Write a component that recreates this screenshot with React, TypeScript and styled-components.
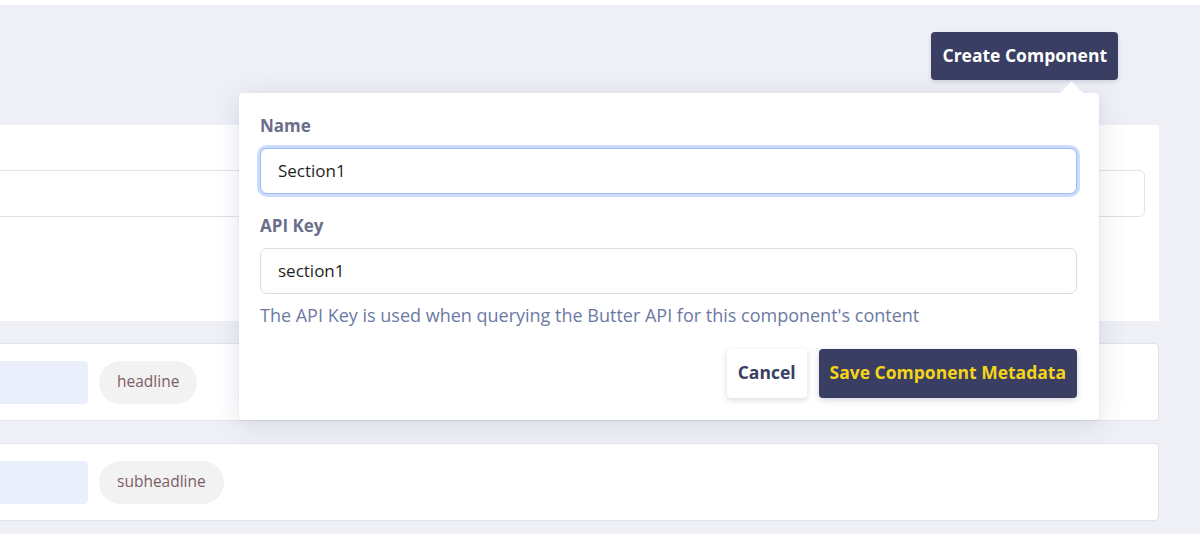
import { FC, ReactElement } from "react";
import styled, { createGlobalStyle } from "styled-components";

const GlobalStyle = createGlobalStyle`
  html, body {
    margin: 0;
    padding: 0;
    background: #eff0f6;
    font-family: "Open Sans", "Lato", sans-serif;
  }
  * {
    box-sizing: border-box;
  }
`;

const navy = "#393e62";

const App: FC = (): ReactElement => {
  return (
    <Page>
      <GlobalStyle />
      <TopStrip />
      <Header>
        <PrimaryButton>Create Component</PrimaryButton>
      </Header>

      <Cards>
        <SettingsCard>
          <GhostInput />
        </SettingsCard>
        <FieldCard>
          <FieldBox />
          <Tag>headline</Tag>
        </FieldCard>
        <FieldCard>
          <FieldBox />
          <Tag>subheadline</Tag>
        </FieldCard>
      </Cards>

      <Popover>
        <Arrow />
        <Label>Name</Label>
        <TextInput focused defaultValue="Section1" />
        <Label style={{ marginTop: 20 }}>API Key</Label>
        <TextInput defaultValue="section1" />
        <Help>The API Key is used when querying the Butter API for this component's content</Help>
        <Actions>
          <CancelButton>Cancel</CancelButton>
          <SaveButton>Save Component Metadata</SaveButton>
        </Actions>
      </Popover>
    </Page>
  );
};

const Page = styled.div`
  position: relative;
  width: 1200px;
  height: 534px;
  overflow: hidden;
  background: #eff0f6;
`;
const TopStrip = styled.div`
  height: 5px;
  background: #ffffff;
`;
const Header = styled.div`
  height: 120px;
  display: flex;
  justify-content: flex-end;
  align-items: flex-start;
  padding: 27px 82px 0 0;
`;
const PrimaryButton = styled.button`
  height: 48px;
  padding: 0 11px 3px;
  border: none;
  border-radius: 4px;
  background: ${navy};
  color: #ffffff;
  font-family: inherit;
  font-size: 17.5px;
  font-weight: 700;
  box-shadow: 0 2px 4px rgba(40, 46, 90, 0.15);
`;
const Cards = styled.div`
  display: flex;
  flex-direction: column;
  gap: 22px;
  width: 1180px;
  margin-left: -21px;
`;
const SettingsCard = styled.div`
  height: 196px;
  background: #ffffff;
  padding: 45px 14px 0 0;
`;
const GhostInput = styled.div`
  height: 47px;
  border: 1px solid #e1e2e8;
  border-radius: 6px;
`;
const FieldCard = styled.div`
  height: 78px;
  background: #ffffff;
  border: 1px solid #e2e3ea;
  border-radius: 4px;
  display: flex;
  align-items: center;
  gap: 11px;
`;
const FieldBox = styled.div`
  width: 108px;
  height: 43px;
  border-radius: 4px;
  background: #ebeefb;
`;
const Tag = styled.span`
  height: 43px;
  padding: 0 18px 2px;
  display: flex;
  align-items: center;
  border-radius: 22px;
  background: #f3f2f2;
  color: #7a5e66;
  font-size: 15.5px;
`;
const Popover = styled.div`
  position: absolute;
  left: 239px;
  top: 93px;
  width: 860px;
  padding: 21px 22px 22px 21px;
  background: #ffffff;
  border-radius: 4px;
  box-shadow: 0 4px 28px rgba(60, 70, 120, 0.14), 0 1px 3px rgba(60, 70, 120, 0.08);
`;
const Arrow = styled.div`
  position: absolute;
  top: -8px;
  right: 19px;
  width: 17px;
  height: 17px;
  background: #ffffff;
  transform: rotate(45deg);
`;
const Label = styled.div`
  position: relative;
  font-size: 17px;
  font-weight: 700;
  line-height: 24px;
  color: #6a6e8a;
  margin-bottom: 10px;
`;
const TextInput = styled.input<{ focused?: boolean }>`
  display: block;
  width: 100%;
  height: 46px;
  padding: 0 17px 2px;
  border: 1px solid ${(p) => (p.focused ? "#9bbcf5" : "#dcdde3")};
  border-radius: 7px;
  box-shadow: ${(p) => (p.focused ? "0 0 0 3px #cbdcfb" : "none")};
  outline: none;
  font-family: inherit;
  font-size: 17px;
  color: #1f1f24;
  background: #ffffff;
`;
const Help = styled.div`
  margin-top: 10px;
  font-size: 18px;
  line-height: 22px;
  color: #6c7aa3;
`;
const Actions = styled.div`
  margin-top: 23px;
  display: flex;
  justify-content: flex-end;
  gap: 12px;
`;
const CancelButton = styled.button`
  height: 49px;
  padding: 0 11px 4px;
  border: none;
  border-radius: 4px;
  background: #ffffff;
  color: ${navy};
  font-family: inherit;
  font-size: 17.5px;
  font-weight: 700;
  box-shadow: 0 2px 6px rgba(40, 46, 90, 0.18);
`;
const SaveButton = styled.button`
  height: 49px;
  padding: 0 11px 4px;
  border: none;
  border-radius: 4px;
  background: ${navy};
  color: #f6d519;
  font-family: inherit;
  font-size: 17.5px;
  font-weight: 700;
  box-shadow: 0 2px 6px rgba(40, 46, 90, 0.2);
`;

export default App;
